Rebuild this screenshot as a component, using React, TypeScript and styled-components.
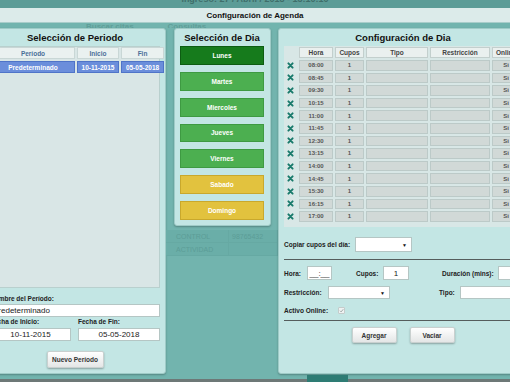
import React from 'react';
import styled, { createGlobalStyle } from 'styled-components';

const GlobalStyle = createGlobalStyle`
    html, body {
        margin: 0;
        padding: 0;
        width: 510px;
        height: 382px;
        overflow: hidden;
        background: #72b4ae;
        font-family: 'Liberation Sans', Arial, sans-serif;
    }
`;

const Page = styled.div`
    width: 510px;
    height: 382px;
    display: flex;
    flex-direction: column;
    overflow: hidden;
`;

const TopBand = styled.div`
    height: 8px;
    background: #5c9c97;
    display: flex;
    justify-content: center;
    align-items: flex-end;
    overflow: hidden;
`;

const TopText = styled.span`
    font-size: 9px;
    line-height: 9px;
    margin-bottom: 4px;
    color: #3f6e6a;
    font-weight: bold;
`;

const TitleBar = styled.div`
    height: 14px;
    background: #dcebea;
    border-bottom: 1px solid #a9cdca;
    display: flex;
    align-items: center;
    justify-content: center;
    font-size: 8px;
    font-weight: bold;
    color: #111;
`;

const Stage = styled.div`
    height: 356px;
    background: #72b4ae;
    display: flex;
    flex-direction: column;
`;

const TabStrip = styled.div`
    height: 5px;
    overflow: hidden;
    display: flex;
    align-items: flex-start;
    gap: 34px;
    padding-left: 86px;
`;

const TabText = styled.span`
    font-size: 8px;
    line-height: 8px;
    font-weight: bold;
    color: #5f9e98;
`;

const Columns = styled.div`
    height: 346px;
    display: flex;
    margin-left: -16px;
`;

const Panel = styled.div<{ $w: number; $h?: number }>`
    width: ${({ $w }) => $w}px;
    height: ${({ $h }) => ($h ? `${$h}px` : '100%')};
    box-sizing: border-box;
    flex-shrink: 0;
    background: #c3e6e4;
    border: 1px solid #9fcbc7;
    border-radius: 3px;
    box-shadow: 0 1px 2px rgba(0, 0, 0, 0.25);
    display: flex;
    flex-direction: column;
    padding: 0 5px;
`;

const PanelTitle = styled.div`
    height: 17px;
    display: flex;
    align-items: center;
    justify-content: center;
    font-size: 9.5px;
    font-weight: bold;
    color: #111;
`;

/* ---------- left panel ---------- */

const PeriodBox = styled.div`
    height: 242px;
    background: #d9e6e6;
    border: 1px solid #b9d0ce;
    box-sizing: border-box;
    display: grid;
    grid-template-columns: 84px 42px 43px;
    grid-auto-rows: 12px;
    column-gap: 2px;
    row-gap: 2px;
    align-content: start;
`;

const PeriodHead = styled.div`
    background: #eaf1f0;
    border: 1px solid #c9d7d6;
    display: flex;
    align-items: center;
    justify-content: center;
    font-size: 6.5px;
    font-weight: bold;
    color: #4a6f98;
`;

const PeriodCell = styled.div`
    background: #6b8edb;
    border: 1px solid #4f74c8;
    display: flex;
    align-items: center;
    justify-content: center;
    font-size: 6.5px;
    font-weight: bold;
    color: #fff;
`;

const FieldLabel = styled.div<{ $mt?: number }>`
    height: 8px;
    line-height: 8px;
    margin-top: ${({ $mt }) => $mt ?? 0}px;
    font-size: 6.5px;
    font-weight: bold;
    color: #222;
    white-space: nowrap;
`;

const TextInput = styled.div<{ $w?: number; $center?: boolean; $h?: number }>`
    width: ${({ $w }) => ($w ? `${$w}px` : '100%')};
    height: ${({ $h }) => $h ?? 13}px;
    box-sizing: border-box;
    background: #fff;
    border: 1px solid #b5c6c4;
    font-size: 8px;
    color: #222;
    display: flex;
    align-items: center;
    justify-content: ${({ $center }) => ($center ? 'center' : 'flex-start')};
    padding: 0 2px;
    flex-shrink: 0;
`;

const DateRow = styled.div`
    display: flex;
    gap: 7px;
    margin-top: 1px;
`;

const DateField = styled.div<{ $w: number }>`
    width: ${({ $w }) => $w}px;
    display: flex;
    flex-direction: column;
    gap: 2px;
`;

const GrayButton = styled.div<{ $w: number; $h?: number }>`
    width: ${({ $w }) => $w}px;
    height: ${({ $h }) => $h ?? 17}px;
    box-sizing: border-box;
    background: linear-gradient(#ffffff, #e4e6e6);
    border: 1px solid #c9d0cf;
    border-radius: 2px;
    box-shadow: 0 1px 2px rgba(0, 0, 0, 0.3);
    display: flex;
    align-items: center;
    justify-content: center;
    font-size: 6.5px;
    font-weight: bold;
    color: #333;
`;

const CenterRow = styled.div<{ $mt: number; $gap?: number }>`
    display: flex;
    justify-content: center;
    gap: ${({ $gap }) => $gap ?? 0}px;
    margin-top: ${({ $mt }) => $mt}px;
`;

/* ---------- middle column ---------- */

const MiddleColumn = styled.div`
    width: 112px;
    flex-shrink: 0;
    display: flex;
    flex-direction: column;
    padding: 0 7px 0 8px;
    box-sizing: border-box;
`;

const DayPanel = styled(Panel)`
    padding: 0 6px 5px 5px;
    gap: 7px;
`;

const DayButton = styled.div<{ $tone: 'active' | 'green' | 'yellow' }>`
    height: 19px;
    box-sizing: border-box;
    background: ${({ $tone }) =>
        $tone === 'active' ? '#167b1c' : $tone === 'green' ? '#4caf50' : '#e2c23e'};
    border: 1px solid
        ${({ $tone }) => ($tone === 'active' ? '#0d5d12' : $tone === 'green' ? '#3e9a42' : '#c9a82c')};
    display: flex;
    align-items: center;
    justify-content: center;
    font-size: 6.5px;
    font-weight: bold;
    color: #fff;
`;

const BackTable = styled.div`
    margin: 4px -7px 0 -8px;
    display: grid;
    grid-template-columns: 63px 49px;
    grid-auto-rows: 13px;
`;

const BackCell = styled.div`
    border-bottom: 1px solid #66a9a3;
    border-right: 1px solid #66a9a3;
    background: #6aaea8;
    font-size: 7px;
    color: #5c9d97;
    display: flex;
    align-items: center;
    padding-left: 10px;
    &:nth-child(2n) {
        padding-left: 3px;
    }
`;

/* ---------- right panel ---------- */

const SlotBox = styled.div`
    height: 181px;
    background: #d8e7e6;
    box-sizing: border-box;
    padding-top: 1px;
    display: grid;
    grid-template-columns: 13px 34px 29px 62px 60px 28px;
    grid-template-rows: 11px;
    grid-auto-rows: 10.6px;
    column-gap: 2px;
    row-gap: 2px;
    overflow: hidden;
`;

const SlotHead = styled.div<{ $blank?: boolean }>`
    background: ${({ $blank }) => ($blank ? 'transparent' : '#eaf0ef')};
    border: ${({ $blank }) => ($blank ? 'none' : '1px solid #c3cfcd')};
    display: flex;
    align-items: center;
    justify-content: center;
    font-size: 6.5px;
    font-weight: bold;
    color: #444;
    white-space: nowrap;
    overflow: hidden;
`;

const SlotCell = styled.div`
    background: #d1d9d7;
    border: 1px solid #bccac8;
    display: flex;
    align-items: center;
    justify-content: center;
    font-size: 6px;
    font-weight: bold;
    color: #555;
    white-space: nowrap;
    overflow: hidden;
`;

const DeleteCell = styled.div`
    display: flex;
    align-items: center;
    justify-content: center;
`;

const FormRow = styled.div<{ $mt: number; $h: number }>`
    display: flex;
    align-items: center;
    height: ${({ $h }) => $h}px;
    margin-top: ${({ $mt }) => $mt}px;
`;

const RowLabel = styled.div<{ $w: number }>`
    width: ${({ $w }) => $w}px;
    flex-shrink: 0;
    font-size: 6.5px;
    font-weight: bold;
    color: #222;
    white-space: nowrap;
`;

const Slot = styled.div<{ $w: number }>`
    width: ${({ $w }) => $w}px;
    flex-shrink: 0;
    display: flex;
    align-items: center;
`;

const SelectBox = styled.div<{ $w: number; $h: number }>`
    width: ${({ $w }) => $w}px;
    height: ${({ $h }) => $h}px;
    box-sizing: border-box;
    background: #fff;
    border: 1px solid #b5c6c4;
    display: flex;
    align-items: center;
    justify-content: flex-end;
    padding-right: 4px;
    font-size: 5px;
    color: #111;
    flex-shrink: 0;
`;

const Divider = styled.div<{ $mt: number }>`
    height: 1px;
    background: #555d5c;
    margin-top: ${({ $mt }) => $mt}px;
`;

const CheckBox = styled.div`
    width: 7px;
    height: 7px;
    box-sizing: border-box;
    border: 1px solid #c4cccb;
    border-radius: 1px;
    background: #eef2f2;
    display: flex;
    align-items: center;
    justify-content: center;
`;

const Footer = styled.div`
    flex: 1;
    background: #6d7877;
    display: flex;
    padding-left: 307px;
`;

const FooterBlock = styled.div`
    width: 41px;
    background: #2e7c74;
    margin-top: -4px;
`;

const DeleteIcon = () => (
    <svg width="7" height="7" viewBox="0 0 10 10">
        <path d="M2 2 L8 8 M8 2 L2 8" stroke="#187a6b" strokeWidth="2.8" strokeLinecap="round" />
    </svg>
);

const days: { name: string; tone: 'active' | 'green' | 'yellow' }[] = [
    { name: 'Lunes', tone: 'active' },
    { name: 'Martes', tone: 'green' },
    { name: 'Miercoles', tone: 'green' },
    { name: 'Jueves', tone: 'green' },
    { name: 'Viernes', tone: 'green' },
    { name: 'Sabado', tone: 'yellow' },
    { name: 'Domingo', tone: 'yellow' },
];

const slots = [
    '08:00', '08:45', '09:30', '10:15', '11:00', '11:45', '12:30',
    '13:15', '14:00', '14:45', '15:30', '16:15', '17:00',
];

const App = () => {
    return (
        <Page>
            <GlobalStyle />
            <TopBand>
                <TopText>Ingreso: 27 / Abril / 2018 - 13:10:10</TopText>
            </TopBand>
            <TitleBar>Configuración de Agenda</TitleBar>
            <Stage>
                <TabStrip>
                    <TabText>Buscar citas</TabText>
                    <TabText>Consultas</TabText>
                </TabStrip>
                <Columns>
                    <Panel $w={182}>
                        <PanelTitle>Selección de Periodo</PanelTitle>
                        <PeriodBox>
                            <PeriodHead>Período</PeriodHead>
                            <PeriodHead>Inicio</PeriodHead>
                            <PeriodHead>Fin</PeriodHead>
                            <PeriodCell>Predeterminado</PeriodCell>
                            <PeriodCell>10-11-2015</PeriodCell>
                            <PeriodCell>05-05-2018</PeriodCell>
                        </PeriodBox>
                        <FieldLabel $mt={7}>Nombre del Período:</FieldLabel>
                        <TextInput style={{ marginTop: 1 }}>Predeterminado</TextInput>
                        <DateRow>
                            <DateField $w={82}>
                                <FieldLabel>Fecha de Inicio:</FieldLabel>
                                <TextInput $center>10-11-2015</TextInput>
                            </DateField>
                            <DateField $w={83}>
                                <FieldLabel>Fecha de Fin:</FieldLabel>
                                <TextInput $center>05-05-2018</TextInput>
                            </DateField>
                        </DateRow>
                        <CenterRow $mt={10}>
                            <GrayButton $w={57}>Nuevo Período</GrayButton>
                        </CenterRow>
                    </Panel>

                    <MiddleColumn>
                        <DayPanel $w={97} $h={198}>
                            <PanelTitle style={{ marginBottom: -7 }}>Selección de Dia</PanelTitle>
                            {days.map(d => (
                                <DayButton key={d.name} $tone={d.tone}>
                                    {d.name}
                                </DayButton>
                            ))}
                        </DayPanel>
                        <BackTable>
                            <BackCell>CONTROL</BackCell>
                            <BackCell>98765432</BackCell>
                            <BackCell>ACTIVIDAD</BackCell>
                            <BackCell />
                        </BackTable>
                    </MiddleColumn>

                    <Panel $w={250}>
                        <PanelTitle>Configuración de Dia</PanelTitle>
                        <SlotBox>
                            <SlotHead $blank />
                            <SlotHead>Hora</SlotHead>
                            <SlotHead>Cupos</SlotHead>
                            <SlotHead>Tipo</SlotHead>
                            <SlotHead>Restricción</SlotHead>
                            <SlotHead>Online</SlotHead>
                            {slots.map(h => (
                                <React.Fragment key={h}>
                                    <DeleteCell>
                                        <DeleteIcon />
                                    </DeleteCell>
                                    <SlotCell>{h}</SlotCell>
                                    <SlotCell>1</SlotCell>
                                    <SlotCell />
                                    <SlotCell />
                                    <SlotCell>Si</SlotCell>
                                </React.Fragment>
                            ))}
                        </SlotBox>

                        <FormRow $mt={10} $h={15}>
                            <RowLabel $w={71}>Copiar cupos del día:</RowLabel>
                            <SelectBox $w={57} $h={15}>▼</SelectBox>
                        </FormRow>
                        <Divider $mt={7} />

                        <FormRow $mt={6} $h={14}>
                            <RowLabel $w={23}>Hora:</RowLabel>
                            <Slot $w={49}>
                                <TextInput $w={25} $h={14} $center>
                                    __:__
                                </TextInput>
                            </Slot>
                            <RowLabel $w={27}>Cupos:</RowLabel>
                            <Slot $w={59}>
                                <TextInput $w={26} $h={14} $center>
                                    1
                                </TextInput>
                            </Slot>
                            <RowLabel $w={56}>Duración (mins):</RowLabel>
                            <TextInput $w={40} $h={14} />
                        </FormRow>

                        <FormRow $mt={6} $h={13}>
                            <RowLabel $w={44}>Restricción:</RowLabel>
                            <Slot $w={111}>
                                <SelectBox $w={62} $h={13}>▼</SelectBox>
                            </Slot>
                            <RowLabel $w={21}>Tipo:</RowLabel>
                            <TextInput $w={60} $h={13} />
                        </FormRow>

                        <FormRow $mt={6} $h={10}>
                            <RowLabel $w={54}>Activo Online:</RowLabel>
                            <CheckBox>
                                <svg width="5" height="5" viewBox="0 0 10 10">
                                    <path d="M2 5.5 L4.2 7.8 L8.5 2.5" stroke="#9aa3a2" strokeWidth="1.8" fill="none" />
                                </svg>
                            </CheckBox>
                        </FormRow>
                        <Divider $mt={5} />

                        <CenterRow $mt={6} $gap={13}>
                            <GrayButton $w={45} $h={16}>
                                Agregar
                            </GrayButton>
                            <GrayButton $w={45} $h={16}>
                                Vaciar
                            </GrayButton>
                        </CenterRow>
                    </Panel>
                </Columns>
            </Stage>
            <Footer>
                <FooterBlock />
            </Footer>
        </Page>
    );
};

export default App;
